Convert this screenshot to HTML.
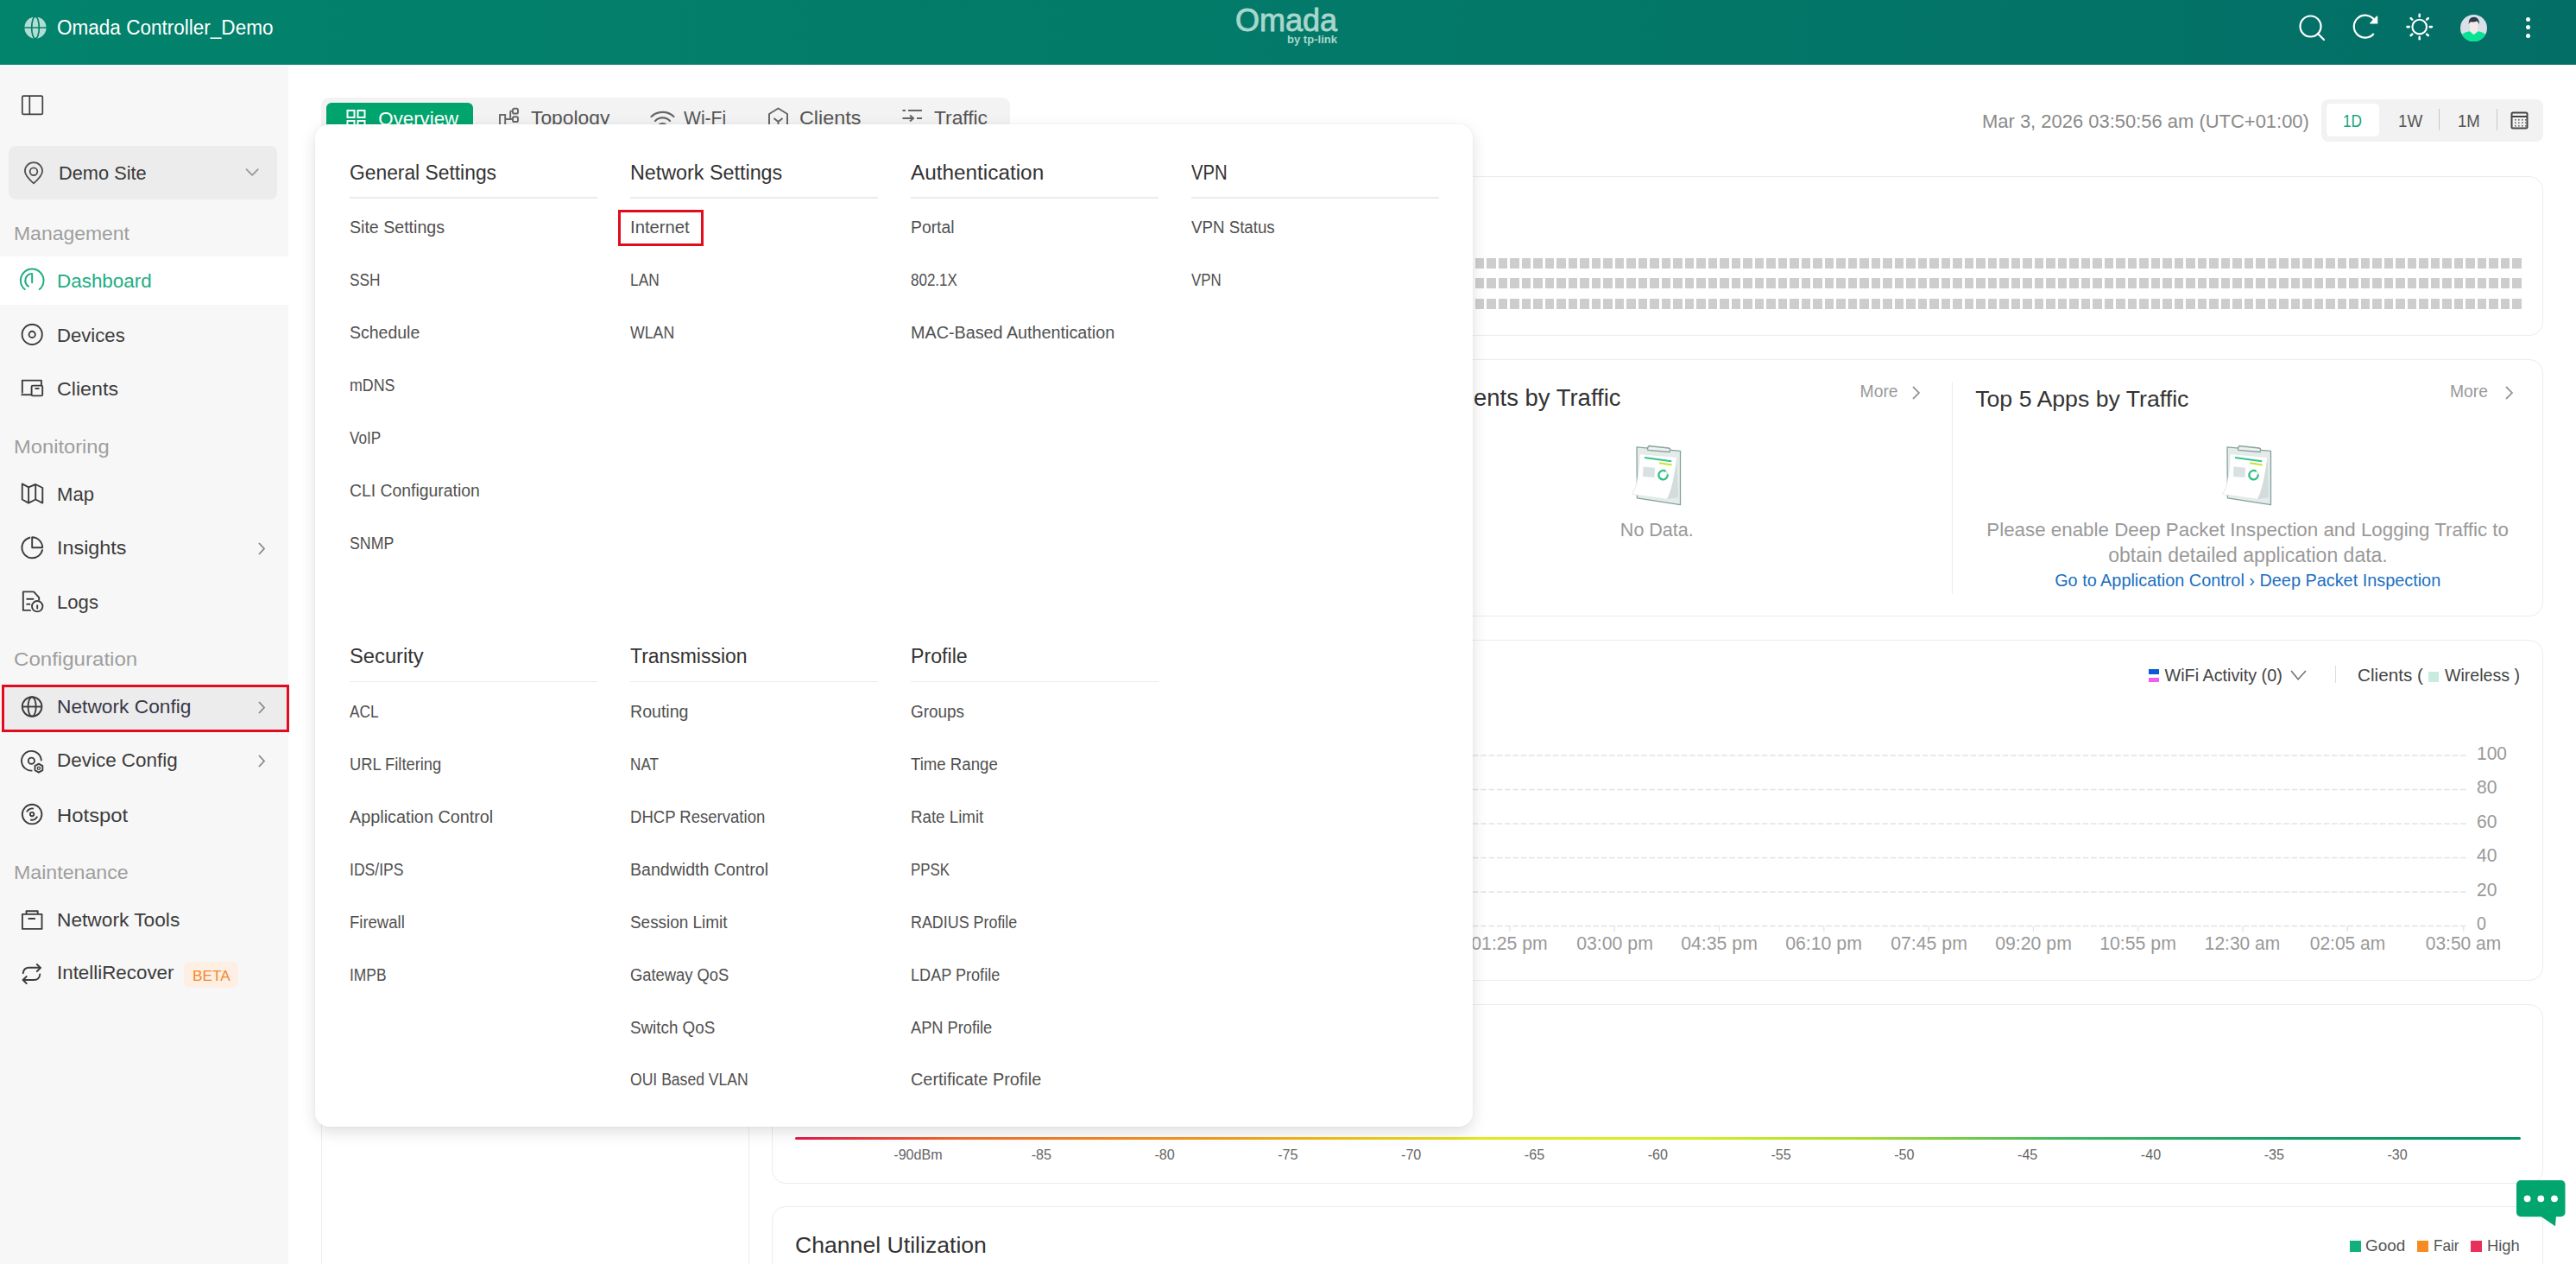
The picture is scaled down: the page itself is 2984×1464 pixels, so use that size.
<!DOCTYPE html>
<html><head><meta charset="utf-8"><title>Omada</title>
<style>
html,body{margin:0;padding:0;width:2984px;height:1464px;overflow:hidden;background:#fff;font-family:"Liberation Sans",sans-serif}
.r{position:absolute}
.t{position:absolute;line-height:1;white-space:nowrap}
</style></head><body>
<div class="r" style="left:0.00px;top:0.00px;width:2984.00px;height:75.00px;background:linear-gradient(90deg,#02836c 0%,#037a69 50%,#036e66 100%)"></div>
<svg class="r" style="left:26.50px;top:17.50px;" width="28" height="28" viewBox="0 0 28 28" fill="none"><circle cx="14" cy="14" r="12.6" fill="#b3ddd4"/><ellipse cx="14" cy="14" rx="4.3" ry="12.8" stroke="#02806b" stroke-width="1.7" fill="none"/><line x1="1" y1="14" x2="27" y2="14" stroke="#02806b" stroke-width="1.5"/></svg>
<div class="t" style="left:65.50px;top:21.41px;font-size:23.5px;color:#ffffff;transform:scaleX(0.9589);transform-origin:0 0;">Omada Controller_Demo</div>
<div class="t" style="left:1431.00px;top:4.68px;font-size:37px;color:#a9d6cd;transform:scaleX(0.9724);transform-origin:0 0;-webkit-text-stroke:0.9px #a9d6cd">Omada</div>
<div class="t" style="left:1491.00px;top:39.07px;font-size:13.5px;color:#a9d6cd;transform:scaleX(0.9667);transform-origin:0 0;font-weight:bold">by tp-link</div>
<svg class="r" style="left:2660.00px;top:14.00px;" width="36" height="36" viewBox="0 0 36 36" fill="none"><circle cx="16.5" cy="16.5" r="12" stroke="#fff" stroke-width="2.2"/><line x1="25" y1="25" x2="32" y2="32" stroke="#fff" stroke-width="2.2" stroke-linecap="round"/></svg>
<svg class="r" style="left:2722.00px;top:14.00px;" width="36" height="36" viewBox="0 0 36 36" fill="none"><path d="M27.76 25.06 A13 13 0 1 1 28.45 9.24" stroke="#fff" stroke-width="2.2" fill="none"/><path d="M23.8 12.9 L31.6 12.9 L31.6 5.1 Z" fill="#fff" stroke="#fff" stroke-width="1.4" stroke-linejoin="round"/></svg>
<svg class="r" style="left:2785.00px;top:13.00px;" width="36" height="36" viewBox="0 0 36 36" fill="none"><circle cx="17.7" cy="18.1" r="8.3" stroke="#fff" stroke-width="2.1"/><line x1="29.70" y1="18.10" x2="31.90" y2="18.10" stroke="#fff" stroke-width="2.6" stroke-linecap="round"/><line x1="26.19" y1="26.59" x2="27.74" y2="28.14" stroke="#fff" stroke-width="2.6" stroke-linecap="round"/><line x1="17.70" y1="30.10" x2="17.70" y2="32.30" stroke="#fff" stroke-width="2.6" stroke-linecap="round"/><line x1="9.21" y1="26.59" x2="7.66" y2="28.14" stroke="#fff" stroke-width="2.6" stroke-linecap="round"/><line x1="5.70" y1="18.10" x2="3.50" y2="18.10" stroke="#fff" stroke-width="2.6" stroke-linecap="round"/><line x1="9.21" y1="9.61" x2="7.66" y2="8.06" stroke="#fff" stroke-width="2.6" stroke-linecap="round"/><line x1="17.70" y1="6.10" x2="17.70" y2="3.90" stroke="#fff" stroke-width="2.6" stroke-linecap="round"/><line x1="26.19" y1="9.61" x2="27.74" y2="8.06" stroke="#fff" stroke-width="2.6" stroke-linecap="round"/></svg>
<svg class="r" style="left:2849.75px;top:16.75px;" width="31" height="31" viewBox="0 0 31 31" fill="none"><defs><clipPath id="av"><circle cx="15.5" cy="15.5" r="15.5"/></clipPath></defs><g clip-path="url(#av)"><rect width="31" height="31" fill="#d9e0e7"/><rect x="11" y="8" width="9.2" height="15.5" rx="2" fill="#f4ebe8"/><path d="M0 31 L0 25 Q3 20.5 11.1 19.3 L15.5 23.3 L20.6 19.3 Q28 20.5 31 25 L31 31 Z" fill="#06e394"/><path d="M9.6 11 Q9.2 3 15.8 2.8 Q22.2 2.8 21.9 11.3 Q21 8 19 7.6 Q16 9 12.2 8.2 Q10.5 9 9.6 11Z" fill="#2b3b47"/></g></svg>
<div class="r" style="left:2925.50px;top:19.50px;width:5.00px;height:5.00px;background:#fff;border-radius:50%"></div>
<div class="r" style="left:2925.50px;top:28.90px;width:5.00px;height:5.00px;background:#fff;border-radius:50%"></div>
<div class="r" style="left:2925.50px;top:38.50px;width:5.00px;height:5.00px;background:#fff;border-radius:50%"></div>
<div class="r" style="left:0.00px;top:75.00px;width:334.00px;height:1389.00px;background:#f7f7f7"></div>
<svg class="r" style="left:0.00px;top:100.00px;" width="60" height="40" viewBox="0 0 60 40" fill="none"><rect x="25.8" y="11.1" width="23.5" height="21.3" rx="1.5" stroke="#404040" stroke-width="1.7" fill="none"/><line x1="34.3" y1="11.1" x2="34.3" y2="32.4" stroke="#404040" stroke-width="1.7"/></svg>
<div class="r" style="left:10.00px;top:169.00px;width:311.00px;height:61.50px;background:#ececec;border-radius:8px"></div>
<svg class="r" style="left:0.00px;top:180.00px;" width="60" height="40" viewBox="0 0 60 40" fill="none"><path d="M39 32.4 C33 27 28.9 21.5 28.9 18.2 A10.1 10.1 0 0 1 49.1 18.2 C49.1 21.5 45 27 39 32.4Z" stroke="#505050" stroke-width="1.8" fill="none" stroke-linejoin="round"/><circle cx="39" cy="18.7" r="4.3" stroke="#505050" stroke-width="1.8"/></svg>
<div class="t" style="left:67.50px;top:190.18px;font-size:22px;color:#3a3a3a;transform:scaleX(0.9906);transform-origin:0 0;">Demo Site</div>
<svg class="r" style="left:270.00px;top:180.00px;" width="40" height="40" viewBox="0 0 40 40" fill="none"><path d="M15.5 16.1 L22.2 22.8 L28.8 16.1" stroke="#999" stroke-width="1.8" fill="none" stroke-linecap="round" stroke-linejoin="round"/></svg>
<div class="t" style="left:16.00px;top:260.18px;font-size:22px;color:#9e9e9e;transform:scaleX(1.0434);transform-origin:0 0;">Management</div>
<div class="r" style="left:0.00px;top:297.00px;width:334.00px;height:56.00px;background:#fff"></div>
<div class="t" style="left:66.00px;top:315.15px;font-size:22.5px;color:#21ad83;transform:scaleX(0.9970);transform-origin:0 0;">Dashboard</div>
<div class="t" style="left:66.00px;top:377.65px;font-size:22.5px;color:#3c3c3c;transform:scaleX(0.9840);transform-origin:0 0;">Devices</div>
<div class="t" style="left:66.00px;top:440.15px;font-size:22.5px;color:#3c3c3c;transform:scaleX(1.0323);transform-origin:0 0;">Clients</div>
<div class="t" style="left:16.00px;top:506.93px;font-size:22px;color:#9e9e9e;transform:scaleX(1.0782);transform-origin:0 0;">Monitoring</div>
<div class="t" style="left:66.00px;top:561.90px;font-size:22.5px;color:#3c3c3c;transform:scaleX(0.9822);transform-origin:0 0;">Map</div>
<div class="t" style="left:66.00px;top:624.15px;font-size:22.5px;color:#3c3c3c;transform:scaleX(1.0381);transform-origin:0 0;">Insights</div>
<svg class="r" style="left:298.00px;top:627.00px;" width="11" height="17" viewBox="0 0 11 17" fill="none"><path d="M2 2 L8 8.5 L2 15" stroke="#888" stroke-width="1.8" fill="none"/></svg>
<div class="t" style="left:66.00px;top:686.65px;font-size:22.5px;color:#3c3c3c;transform:scaleX(0.9837);transform-origin:0 0;">Logs</div>
<div class="t" style="left:16.00px;top:752.93px;font-size:22px;color:#9e9e9e;transform:scaleX(1.0946);transform-origin:0 0;">Configuration</div>
<div class="r" style="left:2.00px;top:792.50px;width:333.40px;height:55.75px;background:#ececec;border:3.5px solid #e10d1e;box-sizing:border-box"></div>
<div class="t" style="left:66.00px;top:807.90px;font-size:22.5px;color:#383848;transform:scaleX(1.0110);transform-origin:0 0;">Network Config</div>
<svg class="r" style="left:298.00px;top:811.00px;" width="11" height="17" viewBox="0 0 11 17" fill="none"><path d="M2 2 L8 8.5 L2 15" stroke="#888" stroke-width="1.8" fill="none"/></svg>
<div class="t" style="left:66.00px;top:870.40px;font-size:22.5px;color:#3c3c3c;transform:scaleX(0.9977);transform-origin:0 0;">Device Config</div>
<svg class="r" style="left:298.00px;top:873.00px;" width="11" height="17" viewBox="0 0 11 17" fill="none"><path d="M2 2 L8 8.5 L2 15" stroke="#888" stroke-width="1.8" fill="none"/></svg>
<div class="t" style="left:66.00px;top:933.90px;font-size:22.5px;color:#3c3c3c;transform:scaleX(1.0606);transform-origin:0 0;">Hotspot</div>
<div class="t" style="left:16.00px;top:1000.18px;font-size:22px;color:#9e9e9e;transform:scaleX(1.0537);transform-origin:0 0;">Maintenance</div>
<div class="t" style="left:66.00px;top:1055.15px;font-size:22.5px;color:#3c3c3c;transform:scaleX(1.0096);transform-origin:0 0;">Network Tools</div>
<div class="t" style="left:66.00px;top:1116.40px;font-size:22.5px;color:#3c3c3c;transform:scaleX(0.9940);transform-origin:0 0;">IntelliRecover</div>
<svg class="r" style="left:0;top:0" width="60" height="1160" viewBox="0 0 60 1160" fill="none">
<g stroke="#21ad83" stroke-width="2" fill="none" stroke-linecap="round">
 <path d="M28.65 335.1 A13.3 13.3 0 1 1 45.75 335.1"/>
 <path d="M32.96 331.58 A8 8 0 0 1 37.2 316.9"/>
 <line x1="37.2" y1="318.8" x2="37.2" y2="327.2"/>
</g>
<g stroke="#3d3d3d" stroke-width="1.9" fill="none" stroke-linejoin="round">
 <circle cx="37.2" cy="387.4" r="11.6"/><circle cx="37.2" cy="387.4" r="3.6"/>
 <path d="M25.8 455.5 L25.8 440.6 L47.9 440.6 L47.9 446"/><path d="M24.5 457.2 L36.5 457.2"/>
 <rect x="36.6" y="446.6" width="12.6" height="11.8" rx="1.5"/><path d="M40.5 450 L45.5 450"/>
 <path d="M25.75 560.4 L33.1 564.4 L41.2 561 L49.3 565 L49.3 582.6 L41.2 578.5 L33.1 582.6 L25.75 578.5 Z"/>
 <line x1="33.1" y1="564.4" x2="33.1" y2="582.6"/><line x1="41.2" y1="561" x2="41.2" y2="578.5"/>
 <path d="M35.2 622.5 A12 12 0 1 0 49.2 636.4"/><path d="M37.2 622.3 L37.2 634.3 L49.2 634.3 A12 12 0 0 0 37.2 622.3 Z"/>
 <path d="M39.2 685.4 L26.8 685.4 L26.8 706.9 L35.8 706.9"/><path d="M39.2 685.4 L45.2 692.1 L45.2 695.5"/>
 <line x1="30.5" y1="693.8" x2="39.2" y2="693.8"/><line x1="30.5" y1="699.8" x2="35.2" y2="699.8"/>
 <circle cx="43.2" cy="702.2" r="6.2"/><line x1="43.2" y1="700.5" x2="43.2" y2="705.5"/>
 <circle cx="37.1" cy="818.5" r="11.3"/><ellipse cx="37.1" cy="818.5" rx="4.6" ry="11.3"/><line x1="25.8" y1="818.5" x2="48.4" y2="818.5"/>
 <path d="M37.4 892.6 A11.4 11.4 0 1 1 47.8 881.2"/><circle cx="36.4" cy="881.2" r="3.6"/>
 <path d="M44.9 884.6 L49.3 887.1 L49.3 892.2 L44.9 894.7 L40.5 892.2 L40.5 887.1 Z"/><circle cx="44.9" cy="889.7" r="1.6" stroke-width="1.3"/>
 <circle cx="37.1" cy="943.1" r="11.3"/><path d="M31 940.5 A6.5 6.5 0 0 1 39 936.7"/><path d="M43.2 945.7 A6.5 6.5 0 0 1 35.2 949.5"/><circle cx="37.1" cy="943.1" r="2.2"/>
 <rect x="25.9" y="1058.9" width="22.6" height="17"/><path d="M30.5 1058.9 L30.5 1055.3 L43.7 1055.3 L43.7 1058.9"/><line x1="33.3" y1="1064" x2="40.2" y2="1064" stroke-linecap="round"/>
</g>
<g stroke="#3d3d3d" stroke-width="1.9" fill="none" stroke-linecap="round" stroke-linejoin="round">
 <path d="M26.7 1127.2 Q27.5 1120.7 33.5 1120.7 L46.7 1120.7"/><path d="M42.8 1117 L46.9 1121 L42.8 1125"/>
 <path d="M46.3 1128.5 Q45.5 1135 39.5 1135 L26.7 1135"/><path d="M30.7 1131 L26.6 1135 L30.7 1139"/>
</g>
</svg>
<div class="r" style="left:212.50px;top:1114.25px;width:63.75px;height:30.00px;background:#fdefe3;border-radius:6px"></div>
<div class="t" style="left:222.50px;top:1122.19px;font-size:17.2px;color:#f5862a;transform:scaleX(1.0029);transform-origin:0 0;">BETA</div>
<div class="r" style="left:372.30px;top:113.00px;width:797.30px;height:56.00px;background:#f3f3f3;border-radius:9px"></div>
<div class="r" style="left:378.00px;top:118.60px;width:170.30px;height:45.00px;background:#00a56e;border-radius:6px"></div>
<div class="t" style="left:438.30px;top:126.62px;font-size:22.3px;color:#fff;">Overview</div>
<svg class="r" style="left:400.00px;top:126.00px;" width="26" height="26" viewBox="0 0 26 26" fill="none"><rect x="2.5" y="2" width="8" height="8" stroke="#fff" stroke-width="2"/><rect x="14.5" y="2" width="8" height="8" stroke="#fff" stroke-width="2"/><rect x="2.5" y="14" width="8" height="8" stroke="#fff" stroke-width="2"/><rect x="14.5" y="14" width="8" height="8" stroke="#fff" stroke-width="2"/></svg>
<svg class="r" style="left:576.00px;top:124.00px;" width="26" height="26" viewBox="0 0 26 26" fill="none"><rect x="3" y="9" width="6.2" height="15" stroke="#666" stroke-width="1.9"/><line x1="9.2" y1="14" x2="18" y2="14" stroke="#666" stroke-width="1.9"/><line x1="15.2" y1="4.6" x2="15.2" y2="14" stroke="#666" stroke-width="1.9"/><line x1="15.2" y1="4.6" x2="18" y2="4.6" stroke="#666" stroke-width="1.9"/><rect x="18" y="1.7" width="6" height="5.8" rx="1.6" stroke="#666" stroke-width="1.9"/><rect x="18" y="11.2" width="6" height="5.8" rx="1.6" stroke="#666" stroke-width="1.9"/></svg>
<svg class="r" style="left:752.00px;top:126.00px;" width="32" height="24" viewBox="0 0 32 24" fill="none"><path d="M2.5 9 A19 19 0 0 1 28.5 9" stroke="#666" stroke-width="2.2" fill="none" stroke-linecap="round"/><path d="M7 14 A12 12 0 0 1 24 14" stroke="#666" stroke-width="2.2" fill="none" stroke-linecap="round"/><path d="M11 19 A6.5 6.5 0 0 1 20 19" stroke="#666" stroke-width="2.2" fill="none" stroke-linecap="round"/></svg>
<svg class="r" style="left:888.00px;top:123.00px;" width="28" height="28" viewBox="0 0 28 28" fill="none"><path d="M3 26 L3 9 L13.5 2.5 L24 9 L24 26" stroke="#666" stroke-width="2" fill="none" stroke-linejoin="round"/><path d="M8.5 14 L13.5 18 L18.5 14 M13.5 18 L13.5 26" stroke="#666" stroke-width="2" fill="none"/></svg>
<svg class="r" style="left:1044.00px;top:126.00px;" width="28" height="20" viewBox="0 0 28 20" fill="none"><line x1="1.5" y1="2" x2="5" y2="2" stroke="#666" stroke-width="2"/><line x1="8" y1="2" x2="24" y2="2" stroke="#666" stroke-width="2"/><line x1="1.5" y1="11" x2="14" y2="11" stroke="#666" stroke-width="2"/><path d="M10 7.5 L14 11 L10 14.5" stroke="#666" stroke-width="2" fill="none"/><line x1="18" y1="11" x2="24" y2="11" stroke="#666" stroke-width="2"/></svg>
<div class="t" style="left:614.60px;top:126.45px;font-size:22.5px;color:#555;transform:scaleX(1.0136);transform-origin:0 0;">Topology</div>
<div class="t" style="left:792.00px;top:126.45px;font-size:22.5px;color:#555;transform:scaleX(0.9374);transform-origin:0 0;">Wi-Fi</div>
<div class="t" style="left:925.70px;top:126.45px;font-size:22.5px;color:#555;transform:scaleX(1.0381);transform-origin:0 0;">Clients</div>
<div class="t" style="left:1082.00px;top:126.45px;font-size:22.5px;color:#555;transform:scaleX(1.0120);transform-origin:0 0;">Traffic</div>
<div class="t" style="left:2295.70px;top:130.18px;font-size:22px;color:#8a8a8a;transform:scaleX(0.9978);transform-origin:0 0;">Mar 3, 2026 03:50:56 am (UTC+01:00)</div>
<div class="r" style="left:2689.20px;top:114.50px;width:257.00px;height:49.00px;background:#f2f2f2;border-radius:8px"></div>
<div class="r" style="left:2694.60px;top:120.10px;width:61.00px;height:37.50px;background:#fff;border-radius:5px"></div>
<div class="t" style="left:2714.00px;top:129.42px;font-size:21px;color:#18a67c;transform:scaleX(0.8228);transform-origin:0 0;">1D</div>
<div class="t" style="left:2778.00px;top:129.42px;font-size:21px;color:#555;transform:scaleX(0.8984);transform-origin:0 0;">1W</div>
<div class="r" style="left:2824.90px;top:126.40px;width:1.20px;height:24.60px;background:#c8c8c8"></div>
<div class="t" style="left:2847.00px;top:129.42px;font-size:21px;color:#555;transform:scaleX(0.8839);transform-origin:0 0;">1M</div>
<div class="r" style="left:2892.00px;top:126.40px;width:1.20px;height:24.60px;background:#c8c8c8"></div>
<svg class="r" style="left:2908.00px;top:129.00px;" width="22" height="22" viewBox="0 0 22 22" fill="none"><rect x="1.5" y="1.5" width="18" height="18" rx="1.5" stroke="#444" stroke-width="2" fill="none"/><line x1="1.5" y1="6" x2="19.5" y2="6" stroke="#444" stroke-width="2"/><rect x="5" y="9.0" width="1.6" height="1.6" fill="#666"/><rect x="5" y="12.5" width="1.6" height="1.6" fill="#666"/><rect x="5" y="16.0" width="1.6" height="1.6" fill="#666"/><rect x="9" y="9.0" width="1.6" height="1.6" fill="#666"/><rect x="9" y="12.5" width="1.6" height="1.6" fill="#666"/><rect x="9" y="16.0" width="1.6" height="1.6" fill="#666"/><rect x="13" y="9.0" width="1.6" height="1.6" fill="#666"/><rect x="13" y="12.5" width="1.6" height="1.6" fill="#666"/><rect x="13" y="16.0" width="1.6" height="1.6" fill="#666"/><rect x="17" y="9.0" width="1.6" height="1.6" fill="#666"/><rect x="17" y="12.5" width="1.6" height="1.6" fill="#666"/><rect x="17" y="16.0" width="1.6" height="1.6" fill="#666"/></svg>
<div class="r" style="left:372.40px;top:203.70px;width:2574.00px;height:185.50px;border:1.5px solid #ececec;border-radius:16px;box-sizing:border-box;background:#fff"></div>
<div class="r" style="left:1708.5px;top:298.7px;width:10.5px;height:12px;background:#cdcdcd"></div><div class="r" style="left:1722.0px;top:298.7px;width:10.5px;height:12px;background:#cdcdcd"></div><div class="r" style="left:1735.5px;top:298.7px;width:10.5px;height:12px;background:#cdcdcd"></div><div class="r" style="left:1749.0px;top:298.7px;width:10.5px;height:12px;background:#cdcdcd"></div><div class="r" style="left:1762.5px;top:298.7px;width:10.5px;height:12px;background:#cdcdcd"></div><div class="r" style="left:1776.0px;top:298.7px;width:10.5px;height:12px;background:#cdcdcd"></div><div class="r" style="left:1789.5px;top:298.7px;width:10.5px;height:12px;background:#cdcdcd"></div><div class="r" style="left:1803.0px;top:298.7px;width:10.5px;height:12px;background:#cdcdcd"></div><div class="r" style="left:1816.5px;top:298.7px;width:10.5px;height:12px;background:#cdcdcd"></div><div class="r" style="left:1830.0px;top:298.7px;width:10.5px;height:12px;background:#cdcdcd"></div><div class="r" style="left:1843.5px;top:298.7px;width:10.5px;height:12px;background:#cdcdcd"></div><div class="r" style="left:1857.0px;top:298.7px;width:10.5px;height:12px;background:#cdcdcd"></div><div class="r" style="left:1870.5px;top:298.7px;width:10.5px;height:12px;background:#cdcdcd"></div><div class="r" style="left:1884.0px;top:298.7px;width:10.5px;height:12px;background:#cdcdcd"></div><div class="r" style="left:1897.5px;top:298.7px;width:10.5px;height:12px;background:#cdcdcd"></div><div class="r" style="left:1911.0px;top:298.7px;width:10.5px;height:12px;background:#cdcdcd"></div><div class="r" style="left:1924.5px;top:298.7px;width:10.5px;height:12px;background:#cdcdcd"></div><div class="r" style="left:1938.0px;top:298.7px;width:10.5px;height:12px;background:#cdcdcd"></div><div class="r" style="left:1951.5px;top:298.7px;width:10.5px;height:12px;background:#cdcdcd"></div><div class="r" style="left:1965.0px;top:298.7px;width:10.5px;height:12px;background:#cdcdcd"></div><div class="r" style="left:1978.5px;top:298.7px;width:10.5px;height:12px;background:#cdcdcd"></div><div class="r" style="left:1992.0px;top:298.7px;width:10.5px;height:12px;background:#cdcdcd"></div><div class="r" style="left:2005.5px;top:298.7px;width:10.5px;height:12px;background:#cdcdcd"></div><div class="r" style="left:2019.0px;top:298.7px;width:10.5px;height:12px;background:#cdcdcd"></div><div class="r" style="left:2032.5px;top:298.7px;width:10.5px;height:12px;background:#cdcdcd"></div><div class="r" style="left:2046.0px;top:298.7px;width:10.5px;height:12px;background:#cdcdcd"></div><div class="r" style="left:2059.5px;top:298.7px;width:10.5px;height:12px;background:#cdcdcd"></div><div class="r" style="left:2073.0px;top:298.7px;width:10.5px;height:12px;background:#cdcdcd"></div><div class="r" style="left:2086.5px;top:298.7px;width:10.5px;height:12px;background:#cdcdcd"></div><div class="r" style="left:2100.0px;top:298.7px;width:10.5px;height:12px;background:#cdcdcd"></div><div class="r" style="left:2113.5px;top:298.7px;width:10.5px;height:12px;background:#cdcdcd"></div><div class="r" style="left:2127.0px;top:298.7px;width:10.5px;height:12px;background:#cdcdcd"></div><div class="r" style="left:2140.5px;top:298.7px;width:10.5px;height:12px;background:#cdcdcd"></div><div class="r" style="left:2154.0px;top:298.7px;width:10.5px;height:12px;background:#cdcdcd"></div><div class="r" style="left:2167.5px;top:298.7px;width:10.5px;height:12px;background:#cdcdcd"></div><div class="r" style="left:2181.0px;top:298.7px;width:10.5px;height:12px;background:#cdcdcd"></div><div class="r" style="left:2194.5px;top:298.7px;width:10.5px;height:12px;background:#cdcdcd"></div><div class="r" style="left:2208.0px;top:298.7px;width:10.5px;height:12px;background:#cdcdcd"></div><div class="r" style="left:2221.5px;top:298.7px;width:10.5px;height:12px;background:#cdcdcd"></div><div class="r" style="left:2235.0px;top:298.7px;width:10.5px;height:12px;background:#cdcdcd"></div><div class="r" style="left:2248.5px;top:298.7px;width:10.5px;height:12px;background:#cdcdcd"></div><div class="r" style="left:2262.0px;top:298.7px;width:10.5px;height:12px;background:#cdcdcd"></div><div class="r" style="left:2275.5px;top:298.7px;width:10.5px;height:12px;background:#cdcdcd"></div><div class="r" style="left:2289.0px;top:298.7px;width:10.5px;height:12px;background:#cdcdcd"></div><div class="r" style="left:2302.5px;top:298.7px;width:10.5px;height:12px;background:#cdcdcd"></div><div class="r" style="left:2316.0px;top:298.7px;width:10.5px;height:12px;background:#cdcdcd"></div><div class="r" style="left:2329.5px;top:298.7px;width:10.5px;height:12px;background:#cdcdcd"></div><div class="r" style="left:2343.0px;top:298.7px;width:10.5px;height:12px;background:#cdcdcd"></div><div class="r" style="left:2356.5px;top:298.7px;width:10.5px;height:12px;background:#cdcdcd"></div><div class="r" style="left:2370.0px;top:298.7px;width:10.5px;height:12px;background:#cdcdcd"></div><div class="r" style="left:2383.5px;top:298.7px;width:10.5px;height:12px;background:#cdcdcd"></div><div class="r" style="left:2397.0px;top:298.7px;width:10.5px;height:12px;background:#cdcdcd"></div><div class="r" style="left:2410.5px;top:298.7px;width:10.5px;height:12px;background:#cdcdcd"></div><div class="r" style="left:2424.0px;top:298.7px;width:10.5px;height:12px;background:#cdcdcd"></div><div class="r" style="left:2437.5px;top:298.7px;width:10.5px;height:12px;background:#cdcdcd"></div><div class="r" style="left:2451.0px;top:298.7px;width:10.5px;height:12px;background:#cdcdcd"></div><div class="r" style="left:2464.5px;top:298.7px;width:10.5px;height:12px;background:#cdcdcd"></div><div class="r" style="left:2478.0px;top:298.7px;width:10.5px;height:12px;background:#cdcdcd"></div><div class="r" style="left:2491.5px;top:298.7px;width:10.5px;height:12px;background:#cdcdcd"></div><div class="r" style="left:2505.0px;top:298.7px;width:10.5px;height:12px;background:#cdcdcd"></div><div class="r" style="left:2518.5px;top:298.7px;width:10.5px;height:12px;background:#cdcdcd"></div><div class="r" style="left:2532.0px;top:298.7px;width:10.5px;height:12px;background:#cdcdcd"></div><div class="r" style="left:2545.5px;top:298.7px;width:10.5px;height:12px;background:#cdcdcd"></div><div class="r" style="left:2559.0px;top:298.7px;width:10.5px;height:12px;background:#cdcdcd"></div><div class="r" style="left:2572.5px;top:298.7px;width:10.5px;height:12px;background:#cdcdcd"></div><div class="r" style="left:2586.0px;top:298.7px;width:10.5px;height:12px;background:#cdcdcd"></div><div class="r" style="left:2599.5px;top:298.7px;width:10.5px;height:12px;background:#cdcdcd"></div><div class="r" style="left:2613.0px;top:298.7px;width:10.5px;height:12px;background:#cdcdcd"></div><div class="r" style="left:2626.5px;top:298.7px;width:10.5px;height:12px;background:#cdcdcd"></div><div class="r" style="left:2640.0px;top:298.7px;width:10.5px;height:12px;background:#cdcdcd"></div><div class="r" style="left:2653.5px;top:298.7px;width:10.5px;height:12px;background:#cdcdcd"></div><div class="r" style="left:2667.0px;top:298.7px;width:10.5px;height:12px;background:#cdcdcd"></div><div class="r" style="left:2680.5px;top:298.7px;width:10.5px;height:12px;background:#cdcdcd"></div><div class="r" style="left:2694.0px;top:298.7px;width:10.5px;height:12px;background:#cdcdcd"></div><div class="r" style="left:2707.5px;top:298.7px;width:10.5px;height:12px;background:#cdcdcd"></div><div class="r" style="left:2721.0px;top:298.7px;width:10.5px;height:12px;background:#cdcdcd"></div><div class="r" style="left:2734.5px;top:298.7px;width:10.5px;height:12px;background:#cdcdcd"></div><div class="r" style="left:2748.0px;top:298.7px;width:10.5px;height:12px;background:#cdcdcd"></div><div class="r" style="left:2761.5px;top:298.7px;width:10.5px;height:12px;background:#cdcdcd"></div><div class="r" style="left:2775.0px;top:298.7px;width:10.5px;height:12px;background:#cdcdcd"></div><div class="r" style="left:2788.5px;top:298.7px;width:10.5px;height:12px;background:#cdcdcd"></div><div class="r" style="left:2802.0px;top:298.7px;width:10.5px;height:12px;background:#cdcdcd"></div><div class="r" style="left:2815.5px;top:298.7px;width:10.5px;height:12px;background:#cdcdcd"></div><div class="r" style="left:2829.0px;top:298.7px;width:10.5px;height:12px;background:#cdcdcd"></div><div class="r" style="left:2842.5px;top:298.7px;width:10.5px;height:12px;background:#cdcdcd"></div><div class="r" style="left:2856.0px;top:298.7px;width:10.5px;height:12px;background:#cdcdcd"></div><div class="r" style="left:2869.5px;top:298.7px;width:10.5px;height:12px;background:#cdcdcd"></div><div class="r" style="left:2883.0px;top:298.7px;width:10.5px;height:12px;background:#cdcdcd"></div><div class="r" style="left:2896.5px;top:298.7px;width:10.5px;height:12px;background:#cdcdcd"></div><div class="r" style="left:2910.0px;top:298.7px;width:10.5px;height:12px;background:#cdcdcd"></div><div class="r" style="left:1708.5px;top:322.1px;width:10.5px;height:12px;background:#cdcdcd"></div><div class="r" style="left:1722.0px;top:322.1px;width:10.5px;height:12px;background:#cdcdcd"></div><div class="r" style="left:1735.5px;top:322.1px;width:10.5px;height:12px;background:#cdcdcd"></div><div class="r" style="left:1749.0px;top:322.1px;width:10.5px;height:12px;background:#cdcdcd"></div><div class="r" style="left:1762.5px;top:322.1px;width:10.5px;height:12px;background:#cdcdcd"></div><div class="r" style="left:1776.0px;top:322.1px;width:10.5px;height:12px;background:#cdcdcd"></div><div class="r" style="left:1789.5px;top:322.1px;width:10.5px;height:12px;background:#cdcdcd"></div><div class="r" style="left:1803.0px;top:322.1px;width:10.5px;height:12px;background:#cdcdcd"></div><div class="r" style="left:1816.5px;top:322.1px;width:10.5px;height:12px;background:#cdcdcd"></div><div class="r" style="left:1830.0px;top:322.1px;width:10.5px;height:12px;background:#cdcdcd"></div><div class="r" style="left:1843.5px;top:322.1px;width:10.5px;height:12px;background:#cdcdcd"></div><div class="r" style="left:1857.0px;top:322.1px;width:10.5px;height:12px;background:#cdcdcd"></div><div class="r" style="left:1870.5px;top:322.1px;width:10.5px;height:12px;background:#cdcdcd"></div><div class="r" style="left:1884.0px;top:322.1px;width:10.5px;height:12px;background:#cdcdcd"></div><div class="r" style="left:1897.5px;top:322.1px;width:10.5px;height:12px;background:#cdcdcd"></div><div class="r" style="left:1911.0px;top:322.1px;width:10.5px;height:12px;background:#cdcdcd"></div><div class="r" style="left:1924.5px;top:322.1px;width:10.5px;height:12px;background:#cdcdcd"></div><div class="r" style="left:1938.0px;top:322.1px;width:10.5px;height:12px;background:#cdcdcd"></div><div class="r" style="left:1951.5px;top:322.1px;width:10.5px;height:12px;background:#cdcdcd"></div><div class="r" style="left:1965.0px;top:322.1px;width:10.5px;height:12px;background:#cdcdcd"></div><div class="r" style="left:1978.5px;top:322.1px;width:10.5px;height:12px;background:#cdcdcd"></div><div class="r" style="left:1992.0px;top:322.1px;width:10.5px;height:12px;background:#cdcdcd"></div><div class="r" style="left:2005.5px;top:322.1px;width:10.5px;height:12px;background:#cdcdcd"></div><div class="r" style="left:2019.0px;top:322.1px;width:10.5px;height:12px;background:#cdcdcd"></div><div class="r" style="left:2032.5px;top:322.1px;width:10.5px;height:12px;background:#cdcdcd"></div><div class="r" style="left:2046.0px;top:322.1px;width:10.5px;height:12px;background:#cdcdcd"></div><div class="r" style="left:2059.5px;top:322.1px;width:10.5px;height:12px;background:#cdcdcd"></div><div class="r" style="left:2073.0px;top:322.1px;width:10.5px;height:12px;background:#cdcdcd"></div><div class="r" style="left:2086.5px;top:322.1px;width:10.5px;height:12px;background:#cdcdcd"></div><div class="r" style="left:2100.0px;top:322.1px;width:10.5px;height:12px;background:#cdcdcd"></div><div class="r" style="left:2113.5px;top:322.1px;width:10.5px;height:12px;background:#cdcdcd"></div><div class="r" style="left:2127.0px;top:322.1px;width:10.5px;height:12px;background:#cdcdcd"></div><div class="r" style="left:2140.5px;top:322.1px;width:10.5px;height:12px;background:#cdcdcd"></div><div class="r" style="left:2154.0px;top:322.1px;width:10.5px;height:12px;background:#cdcdcd"></div><div class="r" style="left:2167.5px;top:322.1px;width:10.5px;height:12px;background:#cdcdcd"></div><div class="r" style="left:2181.0px;top:322.1px;width:10.5px;height:12px;background:#cdcdcd"></div><div class="r" style="left:2194.5px;top:322.1px;width:10.5px;height:12px;background:#cdcdcd"></div><div class="r" style="left:2208.0px;top:322.1px;width:10.5px;height:12px;background:#cdcdcd"></div><div class="r" style="left:2221.5px;top:322.1px;width:10.5px;height:12px;background:#cdcdcd"></div><div class="r" style="left:2235.0px;top:322.1px;width:10.5px;height:12px;background:#cdcdcd"></div><div class="r" style="left:2248.5px;top:322.1px;width:10.5px;height:12px;background:#cdcdcd"></div><div class="r" style="left:2262.0px;top:322.1px;width:10.5px;height:12px;background:#cdcdcd"></div><div class="r" style="left:2275.5px;top:322.1px;width:10.5px;height:12px;background:#cdcdcd"></div><div class="r" style="left:2289.0px;top:322.1px;width:10.5px;height:12px;background:#cdcdcd"></div><div class="r" style="left:2302.5px;top:322.1px;width:10.5px;height:12px;background:#cdcdcd"></div><div class="r" style="left:2316.0px;top:322.1px;width:10.5px;height:12px;background:#cdcdcd"></div><div class="r" style="left:2329.5px;top:322.1px;width:10.5px;height:12px;background:#cdcdcd"></div><div class="r" style="left:2343.0px;top:322.1px;width:10.5px;height:12px;background:#cdcdcd"></div><div class="r" style="left:2356.5px;top:322.1px;width:10.5px;height:12px;background:#cdcdcd"></div><div class="r" style="left:2370.0px;top:322.1px;width:10.5px;height:12px;background:#cdcdcd"></div><div class="r" style="left:2383.5px;top:322.1px;width:10.5px;height:12px;background:#cdcdcd"></div><div class="r" style="left:2397.0px;top:322.1px;width:10.5px;height:12px;background:#cdcdcd"></div><div class="r" style="left:2410.5px;top:322.1px;width:10.5px;height:12px;background:#cdcdcd"></div><div class="r" style="left:2424.0px;top:322.1px;width:10.5px;height:12px;background:#cdcdcd"></div><div class="r" style="left:2437.5px;top:322.1px;width:10.5px;height:12px;background:#cdcdcd"></div><div class="r" style="left:2451.0px;top:322.1px;width:10.5px;height:12px;background:#cdcdcd"></div><div class="r" style="left:2464.5px;top:322.1px;width:10.5px;height:12px;background:#cdcdcd"></div><div class="r" style="left:2478.0px;top:322.1px;width:10.5px;height:12px;background:#cdcdcd"></div><div class="r" style="left:2491.5px;top:322.1px;width:10.5px;height:12px;background:#cdcdcd"></div><div class="r" style="left:2505.0px;top:322.1px;width:10.5px;height:12px;background:#cdcdcd"></div><div class="r" style="left:2518.5px;top:322.1px;width:10.5px;height:12px;background:#cdcdcd"></div><div class="r" style="left:2532.0px;top:322.1px;width:10.5px;height:12px;background:#cdcdcd"></div><div class="r" style="left:2545.5px;top:322.1px;width:10.5px;height:12px;background:#cdcdcd"></div><div class="r" style="left:2559.0px;top:322.1px;width:10.5px;height:12px;background:#cdcdcd"></div><div class="r" style="left:2572.5px;top:322.1px;width:10.5px;height:12px;background:#cdcdcd"></div><div class="r" style="left:2586.0px;top:322.1px;width:10.5px;height:12px;background:#cdcdcd"></div><div class="r" style="left:2599.5px;top:322.1px;width:10.5px;height:12px;background:#cdcdcd"></div><div class="r" style="left:2613.0px;top:322.1px;width:10.5px;height:12px;background:#cdcdcd"></div><div class="r" style="left:2626.5px;top:322.1px;width:10.5px;height:12px;background:#cdcdcd"></div><div class="r" style="left:2640.0px;top:322.1px;width:10.5px;height:12px;background:#cdcdcd"></div><div class="r" style="left:2653.5px;top:322.1px;width:10.5px;height:12px;background:#cdcdcd"></div><div class="r" style="left:2667.0px;top:322.1px;width:10.5px;height:12px;background:#cdcdcd"></div><div class="r" style="left:2680.5px;top:322.1px;width:10.5px;height:12px;background:#cdcdcd"></div><div class="r" style="left:2694.0px;top:322.1px;width:10.5px;height:12px;background:#cdcdcd"></div><div class="r" style="left:2707.5px;top:322.1px;width:10.5px;height:12px;background:#cdcdcd"></div><div class="r" style="left:2721.0px;top:322.1px;width:10.5px;height:12px;background:#cdcdcd"></div><div class="r" style="left:2734.5px;top:322.1px;width:10.5px;height:12px;background:#cdcdcd"></div><div class="r" style="left:2748.0px;top:322.1px;width:10.5px;height:12px;background:#cdcdcd"></div><div class="r" style="left:2761.5px;top:322.1px;width:10.5px;height:12px;background:#cdcdcd"></div><div class="r" style="left:2775.0px;top:322.1px;width:10.5px;height:12px;background:#cdcdcd"></div><div class="r" style="left:2788.5px;top:322.1px;width:10.5px;height:12px;background:#cdcdcd"></div><div class="r" style="left:2802.0px;top:322.1px;width:10.5px;height:12px;background:#cdcdcd"></div><div class="r" style="left:2815.5px;top:322.1px;width:10.5px;height:12px;background:#cdcdcd"></div><div class="r" style="left:2829.0px;top:322.1px;width:10.5px;height:12px;background:#cdcdcd"></div><div class="r" style="left:2842.5px;top:322.1px;width:10.5px;height:12px;background:#cdcdcd"></div><div class="r" style="left:2856.0px;top:322.1px;width:10.5px;height:12px;background:#cdcdcd"></div><div class="r" style="left:2869.5px;top:322.1px;width:10.5px;height:12px;background:#cdcdcd"></div><div class="r" style="left:2883.0px;top:322.1px;width:10.5px;height:12px;background:#cdcdcd"></div><div class="r" style="left:2896.5px;top:322.1px;width:10.5px;height:12px;background:#cdcdcd"></div><div class="r" style="left:2910.0px;top:322.1px;width:10.5px;height:12px;background:#cdcdcd"></div><div class="r" style="left:1708.5px;top:345.6px;width:10.5px;height:12px;background:#cdcdcd"></div><div class="r" style="left:1722.0px;top:345.6px;width:10.5px;height:12px;background:#cdcdcd"></div><div class="r" style="left:1735.5px;top:345.6px;width:10.5px;height:12px;background:#cdcdcd"></div><div class="r" style="left:1749.0px;top:345.6px;width:10.5px;height:12px;background:#cdcdcd"></div><div class="r" style="left:1762.5px;top:345.6px;width:10.5px;height:12px;background:#cdcdcd"></div><div class="r" style="left:1776.0px;top:345.6px;width:10.5px;height:12px;background:#cdcdcd"></div><div class="r" style="left:1789.5px;top:345.6px;width:10.5px;height:12px;background:#cdcdcd"></div><div class="r" style="left:1803.0px;top:345.6px;width:10.5px;height:12px;background:#cdcdcd"></div><div class="r" style="left:1816.5px;top:345.6px;width:10.5px;height:12px;background:#cdcdcd"></div><div class="r" style="left:1830.0px;top:345.6px;width:10.5px;height:12px;background:#cdcdcd"></div><div class="r" style="left:1843.5px;top:345.6px;width:10.5px;height:12px;background:#cdcdcd"></div><div class="r" style="left:1857.0px;top:345.6px;width:10.5px;height:12px;background:#cdcdcd"></div><div class="r" style="left:1870.5px;top:345.6px;width:10.5px;height:12px;background:#cdcdcd"></div><div class="r" style="left:1884.0px;top:345.6px;width:10.5px;height:12px;background:#cdcdcd"></div><div class="r" style="left:1897.5px;top:345.6px;width:10.5px;height:12px;background:#cdcdcd"></div><div class="r" style="left:1911.0px;top:345.6px;width:10.5px;height:12px;background:#cdcdcd"></div><div class="r" style="left:1924.5px;top:345.6px;width:10.5px;height:12px;background:#cdcdcd"></div><div class="r" style="left:1938.0px;top:345.6px;width:10.5px;height:12px;background:#cdcdcd"></div><div class="r" style="left:1951.5px;top:345.6px;width:10.5px;height:12px;background:#cdcdcd"></div><div class="r" style="left:1965.0px;top:345.6px;width:10.5px;height:12px;background:#cdcdcd"></div><div class="r" style="left:1978.5px;top:345.6px;width:10.5px;height:12px;background:#cdcdcd"></div><div class="r" style="left:1992.0px;top:345.6px;width:10.5px;height:12px;background:#cdcdcd"></div><div class="r" style="left:2005.5px;top:345.6px;width:10.5px;height:12px;background:#cdcdcd"></div><div class="r" style="left:2019.0px;top:345.6px;width:10.5px;height:12px;background:#cdcdcd"></div><div class="r" style="left:2032.5px;top:345.6px;width:10.5px;height:12px;background:#cdcdcd"></div><div class="r" style="left:2046.0px;top:345.6px;width:10.5px;height:12px;background:#cdcdcd"></div><div class="r" style="left:2059.5px;top:345.6px;width:10.5px;height:12px;background:#cdcdcd"></div><div class="r" style="left:2073.0px;top:345.6px;width:10.5px;height:12px;background:#cdcdcd"></div><div class="r" style="left:2086.5px;top:345.6px;width:10.5px;height:12px;background:#cdcdcd"></div><div class="r" style="left:2100.0px;top:345.6px;width:10.5px;height:12px;background:#cdcdcd"></div><div class="r" style="left:2113.5px;top:345.6px;width:10.5px;height:12px;background:#cdcdcd"></div><div class="r" style="left:2127.0px;top:345.6px;width:10.5px;height:12px;background:#cdcdcd"></div><div class="r" style="left:2140.5px;top:345.6px;width:10.5px;height:12px;background:#cdcdcd"></div><div class="r" style="left:2154.0px;top:345.6px;width:10.5px;height:12px;background:#cdcdcd"></div><div class="r" style="left:2167.5px;top:345.6px;width:10.5px;height:12px;background:#cdcdcd"></div><div class="r" style="left:2181.0px;top:345.6px;width:10.5px;height:12px;background:#cdcdcd"></div><div class="r" style="left:2194.5px;top:345.6px;width:10.5px;height:12px;background:#cdcdcd"></div><div class="r" style="left:2208.0px;top:345.6px;width:10.5px;height:12px;background:#cdcdcd"></div><div class="r" style="left:2221.5px;top:345.6px;width:10.5px;height:12px;background:#cdcdcd"></div><div class="r" style="left:2235.0px;top:345.6px;width:10.5px;height:12px;background:#cdcdcd"></div><div class="r" style="left:2248.5px;top:345.6px;width:10.5px;height:12px;background:#cdcdcd"></div><div class="r" style="left:2262.0px;top:345.6px;width:10.5px;height:12px;background:#cdcdcd"></div><div class="r" style="left:2275.5px;top:345.6px;width:10.5px;height:12px;background:#cdcdcd"></div><div class="r" style="left:2289.0px;top:345.6px;width:10.5px;height:12px;background:#cdcdcd"></div><div class="r" style="left:2302.5px;top:345.6px;width:10.5px;height:12px;background:#cdcdcd"></div><div class="r" style="left:2316.0px;top:345.6px;width:10.5px;height:12px;background:#cdcdcd"></div><div class="r" style="left:2329.5px;top:345.6px;width:10.5px;height:12px;background:#cdcdcd"></div><div class="r" style="left:2343.0px;top:345.6px;width:10.5px;height:12px;background:#cdcdcd"></div><div class="r" style="left:2356.5px;top:345.6px;width:10.5px;height:12px;background:#cdcdcd"></div><div class="r" style="left:2370.0px;top:345.6px;width:10.5px;height:12px;background:#cdcdcd"></div><div class="r" style="left:2383.5px;top:345.6px;width:10.5px;height:12px;background:#cdcdcd"></div><div class="r" style="left:2397.0px;top:345.6px;width:10.5px;height:12px;background:#cdcdcd"></div><div class="r" style="left:2410.5px;top:345.6px;width:10.5px;height:12px;background:#cdcdcd"></div><div class="r" style="left:2424.0px;top:345.6px;width:10.5px;height:12px;background:#cdcdcd"></div><div class="r" style="left:2437.5px;top:345.6px;width:10.5px;height:12px;background:#cdcdcd"></div><div class="r" style="left:2451.0px;top:345.6px;width:10.5px;height:12px;background:#cdcdcd"></div><div class="r" style="left:2464.5px;top:345.6px;width:10.5px;height:12px;background:#cdcdcd"></div><div class="r" style="left:2478.0px;top:345.6px;width:10.5px;height:12px;background:#cdcdcd"></div><div class="r" style="left:2491.5px;top:345.6px;width:10.5px;height:12px;background:#cdcdcd"></div><div class="r" style="left:2505.0px;top:345.6px;width:10.5px;height:12px;background:#cdcdcd"></div><div class="r" style="left:2518.5px;top:345.6px;width:10.5px;height:12px;background:#cdcdcd"></div><div class="r" style="left:2532.0px;top:345.6px;width:10.5px;height:12px;background:#cdcdcd"></div><div class="r" style="left:2545.5px;top:345.6px;width:10.5px;height:12px;background:#cdcdcd"></div><div class="r" style="left:2559.0px;top:345.6px;width:10.5px;height:12px;background:#cdcdcd"></div><div class="r" style="left:2572.5px;top:345.6px;width:10.5px;height:12px;background:#cdcdcd"></div><div class="r" style="left:2586.0px;top:345.6px;width:10.5px;height:12px;background:#cdcdcd"></div><div class="r" style="left:2599.5px;top:345.6px;width:10.5px;height:12px;background:#cdcdcd"></div><div class="r" style="left:2613.0px;top:345.6px;width:10.5px;height:12px;background:#cdcdcd"></div><div class="r" style="left:2626.5px;top:345.6px;width:10.5px;height:12px;background:#cdcdcd"></div><div class="r" style="left:2640.0px;top:345.6px;width:10.5px;height:12px;background:#cdcdcd"></div><div class="r" style="left:2653.5px;top:345.6px;width:10.5px;height:12px;background:#cdcdcd"></div><div class="r" style="left:2667.0px;top:345.6px;width:10.5px;height:12px;background:#cdcdcd"></div><div class="r" style="left:2680.5px;top:345.6px;width:10.5px;height:12px;background:#cdcdcd"></div><div class="r" style="left:2694.0px;top:345.6px;width:10.5px;height:12px;background:#cdcdcd"></div><div class="r" style="left:2707.5px;top:345.6px;width:10.5px;height:12px;background:#cdcdcd"></div><div class="r" style="left:2721.0px;top:345.6px;width:10.5px;height:12px;background:#cdcdcd"></div><div class="r" style="left:2734.5px;top:345.6px;width:10.5px;height:12px;background:#cdcdcd"></div><div class="r" style="left:2748.0px;top:345.6px;width:10.5px;height:12px;background:#cdcdcd"></div><div class="r" style="left:2761.5px;top:345.6px;width:10.5px;height:12px;background:#cdcdcd"></div><div class="r" style="left:2775.0px;top:345.6px;width:10.5px;height:12px;background:#cdcdcd"></div><div class="r" style="left:2788.5px;top:345.6px;width:10.5px;height:12px;background:#cdcdcd"></div><div class="r" style="left:2802.0px;top:345.6px;width:10.5px;height:12px;background:#cdcdcd"></div><div class="r" style="left:2815.5px;top:345.6px;width:10.5px;height:12px;background:#cdcdcd"></div><div class="r" style="left:2829.0px;top:345.6px;width:10.5px;height:12px;background:#cdcdcd"></div><div class="r" style="left:2842.5px;top:345.6px;width:10.5px;height:12px;background:#cdcdcd"></div><div class="r" style="left:2856.0px;top:345.6px;width:10.5px;height:12px;background:#cdcdcd"></div><div class="r" style="left:2869.5px;top:345.6px;width:10.5px;height:12px;background:#cdcdcd"></div><div class="r" style="left:2883.0px;top:345.6px;width:10.5px;height:12px;background:#cdcdcd"></div><div class="r" style="left:2896.5px;top:345.6px;width:10.5px;height:12px;background:#cdcdcd"></div><div class="r" style="left:2910.0px;top:345.6px;width:10.5px;height:12px;background:#cdcdcd"></div>
<div class="r" style="left:372.40px;top:416.00px;width:2574.00px;height:298.00px;border:1.5px solid #ececec;border-radius:16px;box-sizing:border-box;background:#fff"></div>
<div class="r" style="left:2261.30px;top:442.40px;width:1.20px;height:245.60px;background:#ececec"></div>
<div class="t" style="left:1706.50px;top:448.44px;font-size:27px;color:#333;transform:scaleX(1.0174);transform-origin:0 0;">ents by Traffic</div>
<div class="t" style="left:1596.95px;top:448.44px;font-size:27px;color:#333;">Top 5 Cli</div>
<div class="t" style="left:2288.20px;top:448.70px;font-size:26.7px;color:#333;">Top 5 Apps by Traffic</div>
<div class="t" style="left:2154.60px;top:444.46px;font-size:19.3px;color:#999;">More</div>
<svg class="r" style="left:2213.00px;top:446.00px;" width="14" height="18" viewBox="0 0 14 18" fill="none"><path d="M3 2 L10 9 L3 16" stroke="#999" stroke-width="1.8" fill="none"/></svg>
<div class="t" style="left:2838.00px;top:444.46px;font-size:19.3px;color:#999;">More</div>
<svg class="r" style="left:2900.00px;top:446.00px;" width="14" height="18" viewBox="0 0 14 18" fill="none"><path d="M3 2 L10 9 L3 16" stroke="#999" stroke-width="1.8" fill="none"/></svg>
<svg class="r" style="left:1888.00px;top:514.00px;" width="62" height="76" viewBox="0 0 62 76" fill="none"><path d="M8 3.8 L58.5 8.4 L58.5 70.7 L8.4 62.9 Z" fill="#e3ecea" stroke="#86a09c" stroke-width="1.3" stroke-linejoin="round"/><path d="M11.2 11.6 L54.5 15.6 Q54.5 44 43.2 64.3 L2.7 58.6 Q11 45 11.2 11.6 Z" fill="#ffffff" stroke="#dfe6e4" stroke-width="0.8"/><path d="M43.2 64.3 Q50 50 54.5 15.6 L56 62 Z" fill="#d2dcda"/><path d="M22 2.5 L45 5 Q47 5.5 46.5 8 L46 9.5 L21 7.5 Q19.5 5 22 2.5Z" fill="#eef2f1" stroke="#86a09c" stroke-width="1.3"/><line x1="17" y1="16" x2="48.2" y2="20.2" stroke="#33c48b" stroke-width="2"/><line x1="34" y1="22.3" x2="48.6" y2="24.5" stroke="#c9e52c" stroke-width="2"/><path d="M15.5 26.6 L29 27.8 L28.5 39 L15 38 Z" fill="#d9e1e3"/><circle cx="38.6" cy="36.2" r="5.2" stroke="#dde3e3" stroke-width="2.2"/><path d="M41.5 31.9 A5.2 5.2 0 1 0 43.7 35.5" stroke="#2fc084" stroke-width="2.2" fill="none"/></svg>
<div class="t" style="left:1876.87px;top:603.60px;font-size:21.5px;color:#999;">No Data.</div>
<svg class="r" style="left:2572.00px;top:514.00px;" width="62" height="76" viewBox="0 0 62 76" fill="none"><path d="M8 3.8 L58.5 8.4 L58.5 70.7 L8.4 62.9 Z" fill="#e3ecea" stroke="#86a09c" stroke-width="1.3" stroke-linejoin="round"/><path d="M11.2 11.6 L54.5 15.6 Q54.5 44 43.2 64.3 L2.7 58.6 Q11 45 11.2 11.6 Z" fill="#ffffff" stroke="#dfe6e4" stroke-width="0.8"/><path d="M43.2 64.3 Q50 50 54.5 15.6 L56 62 Z" fill="#d2dcda"/><path d="M22 2.5 L45 5 Q47 5.5 46.5 8 L46 9.5 L21 7.5 Q19.5 5 22 2.5Z" fill="#eef2f1" stroke="#86a09c" stroke-width="1.3"/><line x1="17" y1="16" x2="48.2" y2="20.2" stroke="#33c48b" stroke-width="2"/><line x1="34" y1="22.3" x2="48.6" y2="24.5" stroke="#c9e52c" stroke-width="2"/><path d="M15.5 26.6 L29 27.8 L28.5 39 L15 38 Z" fill="#d9e1e3"/><circle cx="38.6" cy="36.2" r="5.2" stroke="#dde3e3" stroke-width="2.2"/><path d="M41.5 31.9 A5.2 5.2 0 1 0 43.7 35.5" stroke="#2fc084" stroke-width="2.2" fill="none"/></svg>
<div class="t" style="left:2302.37px;top:602.92px;font-size:22.3px;color:#999;transform:scaleX(1.0024);transform-origin:50% 0;">Please enable Deep Packet Inspection and Logging Traffic to</div>
<div class="t" style="left:2442.23px;top:632.23px;font-size:23px;color:#999;">obtain detailed application data.</div>
<div class="t" style="left:2381.33px;top:663.44px;font-size:19.8px;color:#1b6fc2;transform:scaleX(1.0039);transform-origin:50% 0;">Go to Application Control › Deep Packet Inspection</div>
<div class="r" style="left:372.40px;top:740.90px;width:2574.00px;height:394.70px;border:1.5px solid #ececec;border-radius:16px;box-sizing:border-box;background:#fff"></div>
<div class="r" style="left:2488.60px;top:775.20px;width:12.80px;height:5.80px;background:#0a5ad6"></div>
<div class="r" style="left:2488.60px;top:784.60px;width:12.80px;height:5.80px;background:#f05cf0"></div>
<div class="t" style="left:2507.50px;top:773.04px;font-size:19.8px;color:#444;">WiFi Activity (0)</div>
<svg class="r" style="left:2650.00px;top:772.00px;" width="26" height="20" viewBox="0 0 26 20" fill="none"><path d="M4.1 5 L12.1 14.8 L21 5" stroke="#777" stroke-width="1.7" fill="none"/></svg>
<div class="r" style="left:2704.50px;top:771.00px;width:1.20px;height:20.00px;background:#ddd"></div>
<div class="t" style="left:2730.90px;top:773.21px;font-size:19.6px;color:#444;transform:scaleX(1.0560);transform-origin:0 0;">Clients (</div>
<div class="r" style="left:2813.00px;top:778.00px;width:12.00px;height:12.00px;background:#c8eadf"></div>
<div class="t" style="left:2832.00px;top:773.21px;font-size:19.6px;color:#444;">Wireless )</div>
<div class="t" style="left:2869.00px;top:861.95px;font-size:22.5px;color:#999;transform:scaleX(0.9295);transform-origin:0 0;">100</div>
<div class="t" style="left:2869.00px;top:901.45px;font-size:22.5px;color:#999;transform:scaleX(0.9348);transform-origin:0 0;">80</div>
<div class="t" style="left:2869.00px;top:940.95px;font-size:22.5px;color:#999;transform:scaleX(0.9348);transform-origin:0 0;">60</div>
<div class="t" style="left:2869.00px;top:980.45px;font-size:22.5px;color:#999;transform:scaleX(0.9348);transform-origin:0 0;">40</div>
<div class="t" style="left:2869.00px;top:1019.95px;font-size:22.5px;color:#999;transform:scaleX(0.9348);transform-origin:0 0;">20</div>
<div class="t" style="left:2869.00px;top:1059.45px;font-size:22.5px;color:#999;transform:scaleX(0.8789);transform-origin:0 0;">0</div>
<div class="t" style="left:1701.47px;top:1080.70px;font-size:22.8px;color:#999;transform:scaleX(0.9310);transform-origin:50% 0;">01:25 pm</div>
<div class="t" style="left:1822.75px;top:1080.70px;font-size:22.8px;color:#999;transform:scaleX(0.9336);transform-origin:50% 0;">03:00 pm</div>
<div class="t" style="left:1944.03px;top:1080.70px;font-size:22.8px;color:#999;transform:scaleX(0.9336);transform-origin:50% 0;">04:35 pm</div>
<div class="t" style="left:2065.31px;top:1080.70px;font-size:22.8px;color:#999;transform:scaleX(0.9336);transform-origin:50% 0;">06:10 pm</div>
<div class="t" style="left:2186.59px;top:1080.70px;font-size:22.8px;color:#999;transform:scaleX(0.9336);transform-origin:50% 0;">07:45 pm</div>
<div class="t" style="left:2307.87px;top:1080.70px;font-size:22.8px;color:#999;transform:scaleX(0.9336);transform-origin:50% 0;">09:20 pm</div>
<div class="t" style="left:2429.15px;top:1080.70px;font-size:22.8px;color:#999;transform:scaleX(0.9336);transform-origin:50% 0;">10:55 pm</div>
<div class="t" style="left:2550.43px;top:1080.70px;font-size:22.8px;color:#999;transform:scaleX(0.9204);transform-origin:50% 0;">12:30 am</div>
<div class="t" style="left:2671.71px;top:1080.70px;font-size:22.8px;color:#999;transform:scaleX(0.9204);transform-origin:50% 0;">02:05 am</div>
<div class="t" style="left:2806.22px;top:1080.70px;font-size:22.8px;color:#999;transform:scaleX(0.9204);transform-origin:50% 0;">03:50 am</div>
<svg class="r" style="left:1706.00px;top:860.00px;" width="1151" height="225" viewBox="0 0 1151 225" fill="none"><line x1="0" y1="15.00" x2="1150.5" y2="15.00" stroke="#e3e3e3" stroke-width="1.3" stroke-dasharray="6.5 2.8"/><line x1="0" y1="54.50" x2="1150.5" y2="54.50" stroke="#e3e3e3" stroke-width="1.3" stroke-dasharray="6.5 2.8"/><line x1="0" y1="94.00" x2="1150.5" y2="94.00" stroke="#e3e3e3" stroke-width="1.3" stroke-dasharray="6.5 2.8"/><line x1="0" y1="133.50" x2="1150.5" y2="133.50" stroke="#e3e3e3" stroke-width="1.3" stroke-dasharray="6.5 2.8"/><line x1="0" y1="173.00" x2="1150.5" y2="173.00" stroke="#e3e3e3" stroke-width="1.3" stroke-dasharray="6.5 2.8"/><line x1="0" y1="212.50" x2="1150.5" y2="212.50" stroke="#e3e3e3" stroke-width="1.3" stroke-dasharray="6.5 2.8"/><line x1="43.00" y1="212.5" x2="43.00" y2="218.79999999999995" stroke="#e3e3e3" stroke-width="1.3"/><line x1="164.28" y1="212.5" x2="164.28" y2="218.79999999999995" stroke="#e3e3e3" stroke-width="1.3"/><line x1="285.56" y1="212.5" x2="285.56" y2="218.79999999999995" stroke="#e3e3e3" stroke-width="1.3"/><line x1="406.84" y1="212.5" x2="406.84" y2="218.79999999999995" stroke="#e3e3e3" stroke-width="1.3"/><line x1="528.12" y1="212.5" x2="528.12" y2="218.79999999999995" stroke="#e3e3e3" stroke-width="1.3"/><line x1="649.40" y1="212.5" x2="649.40" y2="218.79999999999995" stroke="#e3e3e3" stroke-width="1.3"/><line x1="770.68" y1="212.5" x2="770.68" y2="218.79999999999995" stroke="#e3e3e3" stroke-width="1.3"/><line x1="891.96" y1="212.5" x2="891.96" y2="218.79999999999995" stroke="#e3e3e3" stroke-width="1.3"/><line x1="1013.24" y1="212.5" x2="1013.24" y2="218.79999999999995" stroke="#e3e3e3" stroke-width="1.3"/><line x1="1147.75" y1="212.5" x2="1147.75" y2="218.79999999999995" stroke="#e3e3e3" stroke-width="1.3"/></svg>
<div class="r" style="left:372.40px;top:1163.00px;width:496.00px;height:400.00px;border:1.5px solid #ececec;border-radius:16px;box-sizing:border-box;background:#fff"></div>
<div class="r" style="left:894.30px;top:1163.00px;width:2052.00px;height:207.70px;border:1.5px solid #ececec;border-radius:16px;box-sizing:border-box;background:#fff"></div>
<div class="r" style="left:920.7px;top:1317.1px;width:1999.3px;height:3px;border-radius:1.5px;background:linear-gradient(90deg,#e5184f 0%,#f2702a 10%,#f59a1a 24%,#f2c214 32%,#e4e81a 40%,#d2f020 52%,#a8dc30 62%,#3ab860 74%,#10a066 86%,#019462 100%)"></div>
<div class="t" style="left:1035.32px;top:1328.87px;font-size:16.1px;color:#666;">-90dBm</div>
<div class="t" style="left:1194.67px;top:1328.87px;font-size:16.1px;color:#666;">-85</div>
<div class="t" style="left:1337.47px;top:1328.87px;font-size:16.1px;color:#666;">-80</div>
<div class="t" style="left:1480.27px;top:1328.87px;font-size:16.1px;color:#666;">-75</div>
<div class="t" style="left:1623.07px;top:1328.87px;font-size:16.1px;color:#666;">-70</div>
<div class="t" style="left:1765.87px;top:1328.87px;font-size:16.1px;color:#666;">-65</div>
<div class="t" style="left:1908.67px;top:1328.87px;font-size:16.1px;color:#666;">-60</div>
<div class="t" style="left:2051.47px;top:1328.87px;font-size:16.1px;color:#666;">-55</div>
<div class="t" style="left:2194.27px;top:1328.87px;font-size:16.1px;color:#666;">-50</div>
<div class="t" style="left:2337.07px;top:1328.87px;font-size:16.1px;color:#666;">-45</div>
<div class="t" style="left:2479.87px;top:1328.87px;font-size:16.1px;color:#666;">-40</div>
<div class="t" style="left:2622.67px;top:1328.87px;font-size:16.1px;color:#666;">-35</div>
<div class="t" style="left:2765.47px;top:1328.87px;font-size:16.1px;color:#666;">-30</div>
<div class="r" style="left:894.30px;top:1397.00px;width:2052.00px;height:200.00px;border:1.5px solid #ececec;border-radius:16px;box-sizing:border-box;background:#fff"></div>
<div class="t" style="left:920.70px;top:1429.40px;font-size:26.7px;color:#333;transform:scaleX(0.9972);transform-origin:0 0;">Channel Utilization</div>
<div class="r" style="left:2722.00px;top:1437.00px;width:13.00px;height:13.00px;background:#12b07b"></div>
<div class="t" style="left:2740.00px;top:1432.92px;font-size:19px;color:#555;transform:scaleX(0.9960);transform-origin:0 0;">Good</div>
<div class="r" style="left:2800.00px;top:1437.00px;width:13.00px;height:13.00px;background:#f58b22"></div>
<div class="t" style="left:2819.00px;top:1432.92px;font-size:19px;color:#555;transform:scaleX(0.9042);transform-origin:0 0;">Fair</div>
<div class="r" style="left:2862.00px;top:1437.00px;width:13.00px;height:13.00px;background:#e8305a"></div>
<div class="t" style="left:2881.00px;top:1432.92px;font-size:19px;color:#555;transform:scaleX(0.9673);transform-origin:0 0;">High</div>
<svg class="r" style="left:2915.00px;top:1367.00px;" width="58" height="55" viewBox="0 0 58 55" fill="none"><rect x="0" y="0" width="56.5" height="42.2" rx="5" fill="#03a56f"/><path d="M27 41 L45 53.2 L46 41 Z" fill="#03a56f"/><circle cx="12.6" cy="21.3" r="3.9" fill="#fff"/><circle cx="28.3" cy="21.3" r="3.9" fill="#fff"/><circle cx="44" cy="21.3" r="3.9" fill="#fff"/></svg>
<div class="r" style="left:365px;top:144px;width:1341px;height:1160.5px;background:#fff;border-radius:16px;box-shadow:0 6px 18px rgba(0,0,0,0.13), 0 0 3px rgba(0,0,0,0.05)"></div>
<div class="t" style="left:405.00px;top:188.53px;font-size:23px;color:#333;transform:scaleX(0.9922);transform-origin:0 0;">General Settings</div>
<div class="r" style="left:405.00px;top:228.00px;width:287.00px;height:1.50px;background:#ebebeb"></div>
<div class="t" style="left:405.00px;top:253.47px;font-size:20px;color:#505050;transform:scaleX(0.9795);transform-origin:0 0;">Site Settings</div>
<div class="t" style="left:405.00px;top:314.35px;font-size:20px;color:#505050;transform:scaleX(0.8632);transform-origin:0 0;">SSH</div>
<div class="t" style="left:405.00px;top:375.23px;font-size:20px;color:#505050;transform:scaleX(0.9741);transform-origin:0 0;">Schedule</div>
<div class="t" style="left:405.00px;top:436.11px;font-size:20px;color:#505050;transform:scaleX(0.8915);transform-origin:0 0;">mDNS</div>
<div class="t" style="left:405.00px;top:496.99px;font-size:20px;color:#505050;transform:scaleX(0.8577);transform-origin:0 0;">VoIP</div>
<div class="t" style="left:405.00px;top:557.87px;font-size:20px;color:#505050;transform:scaleX(0.9685);transform-origin:0 0;">CLI Configuration</div>
<div class="t" style="left:405.00px;top:618.75px;font-size:20px;color:#505050;transform:scaleX(0.8867);transform-origin:0 0;">SNMP</div>
<div class="t" style="left:730.00px;top:188.53px;font-size:23px;color:#333;transform:scaleX(1.0138);transform-origin:0 0;">Network Settings</div>
<div class="r" style="left:730.00px;top:228.00px;width:287.00px;height:1.50px;background:#ebebeb"></div>
<div class="t" style="left:730.00px;top:253.47px;font-size:20px;color:#505050;transform:scaleX(1.0136);transform-origin:0 0;">Internet</div>
<div class="t" style="left:730.00px;top:314.35px;font-size:20px;color:#505050;transform:scaleX(0.8675);transform-origin:0 0;">LAN</div>
<div class="t" style="left:730.00px;top:375.23px;font-size:20px;color:#505050;transform:scaleX(0.8867);transform-origin:0 0;">WLAN</div>
<div class="t" style="left:1055.00px;top:188.53px;font-size:23px;color:#333;transform:scaleX(1.0577);transform-origin:0 0;">Authentication</div>
<div class="r" style="left:1055.00px;top:228.00px;width:287.00px;height:1.50px;background:#ebebeb"></div>
<div class="t" style="left:1055.00px;top:253.47px;font-size:20px;color:#505050;transform:scaleX(0.9665);transform-origin:0 0;">Portal</div>
<div class="t" style="left:1055.00px;top:314.35px;font-size:20px;color:#505050;transform:scaleX(0.8503);transform-origin:0 0;">802.1X</div>
<div class="t" style="left:1055.00px;top:375.23px;font-size:20px;color:#505050;transform:scaleX(0.9882);transform-origin:0 0;">MAC-Based Authentication</div>
<div class="t" style="left:1380.00px;top:188.53px;font-size:23px;color:#333;transform:scaleX(0.8817);transform-origin:0 0;">VPN</div>
<div class="r" style="left:1380.00px;top:228.00px;width:287.00px;height:1.50px;background:#ebebeb"></div>
<div class="t" style="left:1380.00px;top:253.47px;font-size:20px;color:#505050;transform:scaleX(0.9353);transform-origin:0 0;">VPN Status</div>
<div class="t" style="left:1380.00px;top:314.35px;font-size:20px;color:#505050;transform:scaleX(0.8438);transform-origin:0 0;">VPN</div>
<div class="t" style="left:405.00px;top:749.28px;font-size:23px;color:#333;transform:scaleX(1.0320);transform-origin:0 0;">Security</div>
<div class="r" style="left:405.00px;top:788.75px;width:287.00px;height:1.50px;background:#ebebeb"></div>
<div class="t" style="left:405.00px;top:814.22px;font-size:20px;color:#505050;transform:scaleX(0.8675);transform-origin:0 0;">ACL</div>
<div class="t" style="left:405.00px;top:875.10px;font-size:20px;color:#505050;transform:scaleX(0.9162);transform-origin:0 0;">URL Filtering</div>
<div class="t" style="left:405.00px;top:935.98px;font-size:20px;color:#505050;transform:scaleX(0.9903);transform-origin:0 0;">Application Control</div>
<div class="t" style="left:405.00px;top:996.86px;font-size:20px;color:#505050;transform:scaleX(0.8785);transform-origin:0 0;">IDS/IPS</div>
<div class="t" style="left:405.00px;top:1057.74px;font-size:20px;color:#505050;transform:scaleX(0.9252);transform-origin:0 0;">Firewall</div>
<div class="t" style="left:405.00px;top:1118.62px;font-size:20px;color:#505050;transform:scaleX(0.8690);transform-origin:0 0;">IMPB</div>
<div class="t" style="left:730.00px;top:749.28px;font-size:23px;color:#333;transform:scaleX(0.9970);transform-origin:0 0;">Transmission</div>
<div class="r" style="left:730.00px;top:788.75px;width:287.00px;height:1.50px;background:#ebebeb"></div>
<div class="t" style="left:730.00px;top:814.22px;font-size:20px;color:#505050;transform:scaleX(0.9791);transform-origin:0 0;">Routing</div>
<div class="t" style="left:730.00px;top:875.10px;font-size:20px;color:#505050;transform:scaleX(0.8568);transform-origin:0 0;">NAT</div>
<div class="t" style="left:730.00px;top:935.98px;font-size:20px;color:#505050;transform:scaleX(0.9268);transform-origin:0 0;">DHCP Reservation</div>
<div class="t" style="left:730.00px;top:996.86px;font-size:20px;color:#505050;transform:scaleX(0.9790);transform-origin:0 0;">Bandwidth Control</div>
<div class="t" style="left:730.00px;top:1057.74px;font-size:20px;color:#505050;transform:scaleX(0.9459);transform-origin:0 0;">Session Limit</div>
<div class="t" style="left:730.00px;top:1118.62px;font-size:20px;color:#505050;transform:scaleX(0.9176);transform-origin:0 0;">Gateway QoS</div>
<div class="t" style="left:730.00px;top:1179.50px;font-size:20px;color:#505050;transform:scaleX(0.9403);transform-origin:0 0;">Switch QoS</div>
<div class="t" style="left:730.00px;top:1240.38px;font-size:20px;color:#505050;transform:scaleX(0.8787);transform-origin:0 0;">OUI Based VLAN</div>
<div class="t" style="left:1055.00px;top:749.28px;font-size:23px;color:#333;transform:scaleX(1.0084);transform-origin:0 0;">Profile</div>
<div class="r" style="left:1055.00px;top:788.75px;width:287.00px;height:1.50px;background:#ebebeb"></div>
<div class="t" style="left:1055.00px;top:814.22px;font-size:20px;color:#505050;transform:scaleX(0.9452);transform-origin:0 0;">Groups</div>
<div class="t" style="left:1055.00px;top:875.10px;font-size:20px;color:#505050;transform:scaleX(0.9311);transform-origin:0 0;">Time Range</div>
<div class="t" style="left:1055.00px;top:935.98px;font-size:20px;color:#505050;transform:scaleX(0.9358);transform-origin:0 0;">Rate Limit</div>
<div class="t" style="left:1055.00px;top:996.86px;font-size:20px;color:#505050;transform:scaleX(0.8433);transform-origin:0 0;">PPSK</div>
<div class="t" style="left:1055.00px;top:1057.74px;font-size:20px;color:#505050;transform:scaleX(0.8943);transform-origin:0 0;">RADIUS Profile</div>
<div class="t" style="left:1055.00px;top:1118.62px;font-size:20px;color:#505050;transform:scaleX(0.9046);transform-origin:0 0;">LDAP Profile</div>
<div class="t" style="left:1055.00px;top:1179.50px;font-size:20px;color:#505050;transform:scaleX(0.9117);transform-origin:0 0;">APN Profile</div>
<div class="t" style="left:1055.00px;top:1240.38px;font-size:20px;color:#505050;transform:scaleX(0.9932);transform-origin:0 0;">Certificate Profile</div>
<div class="r" style="left:716.00px;top:242.50px;width:99.00px;height:42.50px;border:3.2px solid #e10d1e;box-sizing:border-box"></div>
</body></html>
